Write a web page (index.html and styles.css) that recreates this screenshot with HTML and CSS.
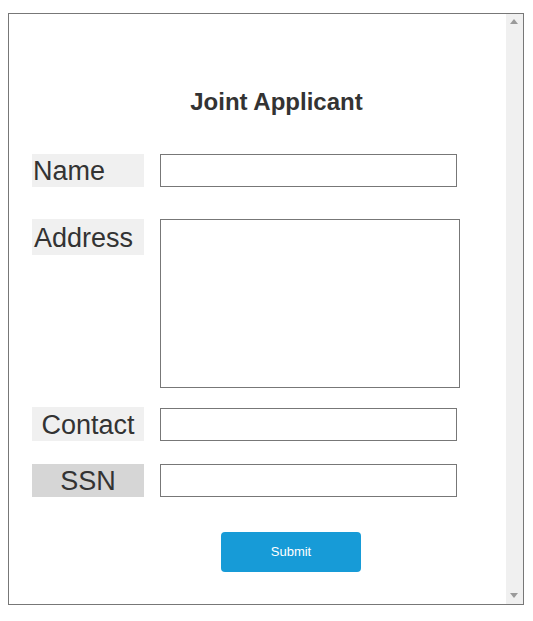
FILE: index.html
```html
<!DOCTYPE html>
<html>
<head>
<meta charset="utf-8">
<link rel="stylesheet" href="styles.css">
</head>
<body>
<div class="frame">
  <div class="content">
    <h1 class="title">Joint Applicant</h1>
    <div class="row row-name">
      <div class="label label-left">Name</div>
      <div class="field"></div>
    </div>
    <div class="row row-address">
      <div class="label label-left label-address">Address</div>
      <div class="field field-area"></div>
    </div>
    <div class="row row-contact">
      <div class="label label-center label-contact">Contact</div>
      <div class="field field-contact"></div>
    </div>
    <div class="row row-ssn">
      <div class="label label-center label-ssn">SSN</div>
      <div class="field"></div>
    </div>
    <div class="button">Submit</div>
  </div>
  <div class="scrollbar">
    <span class="arrow arrow-up"></span>
    <span class="arrow arrow-down"></span>
  </div>
</div>
</body>
</html>
```

FILE: styles.css
```css
html, body {
  margin: 0;
  padding: 0;
  background: #fff;
}
body {
  padding: 13px 9px 0 8px;
  font-family: "Liberation Sans", Arial, sans-serif;
  color: #333;
}
.frame {
  width: 514px;
  height: 590px;
  border: 1px solid #777;
  display: flex;
}
.content {
  flex: 1;
  padding: 74px 0 0 23px;
}
.title {
  margin: 0 0 38px 0;
  padding-left: 15px;
  font-size: 24px;
  line-height: 28px;
  font-weight: bold;
  text-align: center;
  color: #333;
}
.row {
  display: flex;
  align-items: flex-start;
  gap: 16px;
}
.row-address { margin-top: 32px; }
.row-contact { margin-top: 19px; }
.row-ssn { margin-top: 23px; }
.label {
  width: 112px;
  height: 33px;
  padding-top: 1px;
  background: #f0f0f0;
  font-size: 27px;
  line-height: 33px;
  color: #333;
  box-sizing: border-box;
  white-space: nowrap;
  overflow: hidden;
}
.label-left { padding-left: 1px; }
.label-center { text-align: center; }
.label-address { height: 36px; line-height: 36px; padding-left: 2px; }
.label-contact { height: 34px; line-height: 34px; }
.label-ssn { background: #d6d6d6; }
.field {
  width: 297px;
  height: 33px;
  border: 1px solid #777;
  box-sizing: border-box;
  background: #fff;
}
.field-area {
  width: 300px;
  height: 169px;
}
.field-contact { margin-top: 1px; height: 33px; }
.button {
  margin: 35px 0 0 189px;
  width: 140px;
  height: 40px;
  border-radius: 4px;
  background: #179bd7;
  color: #fff;
  font-size: 13px;
  line-height: 40px;
  text-align: center;
}
.scrollbar {
  width: 17px;
  background: #f0f0f0;
  position: relative;
}
.arrow {
  position: absolute;
  left: 4px;
  width: 0;
  height: 0;
  border-left: 4px solid transparent;
  border-right: 4px solid transparent;
}
.arrow-up {
  top: 5px;
  border-bottom: 5px solid #9a9a9a;
}
.arrow-down {
  bottom: 6px;
  border-top: 5px solid #9a9a9a;
}
```
